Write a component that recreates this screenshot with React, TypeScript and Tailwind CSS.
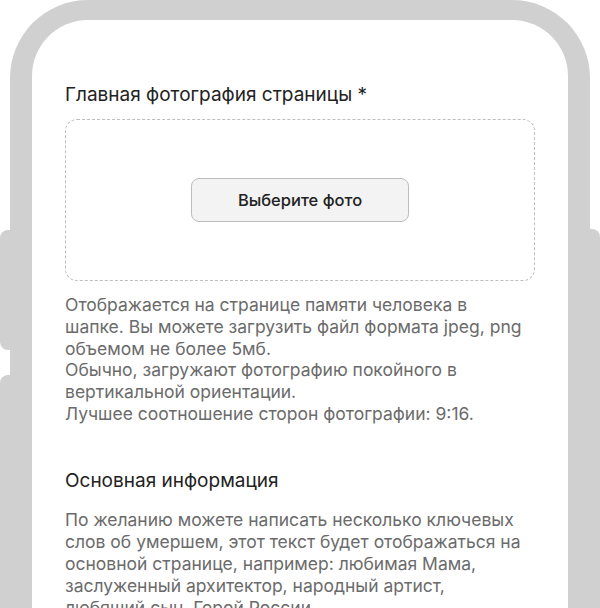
import React from "react";

const font = { fontFamily: "Inter, 'Noto Sans', sans-serif" };

export default function App() {
  return (
    <div className="relative h-[608px] w-[600px] overflow-hidden bg-white" style={font}>
      {/* side buttons */}
      <div className="absolute left-0 top-[230px] h-[120px] w-[14px] rounded-l-[8px] bg-[#d0d0d0]" />
      <div className="absolute left-0 top-[375px] h-[260px] w-[14px] rounded-l-[8px] bg-[#d0d0d0]" />
      <div className="absolute right-0 top-[229px] h-[400px] w-[14px] rounded-r-[8px] bg-[#d0d0d0]" />

      {/* phone frame */}
      <div className="relative mx-[10px] h-[640px] rounded-t-[78px] bg-[#d0d0d0] px-[22px] pt-[20px]">
        <div className="h-full rounded-t-[56px] bg-white pl-[33px] pr-[4px] pt-[62px]">
          <div className="text-[19px] leading-[26px] text-[#222]">Главная фотография страницы *</div>

          <div className="mt-[11px] flex h-[162px] w-[470px] items-center justify-center rounded-[12px] border border-dashed border-[#bdbdbd]">
            <button className="h-[44px] w-[218px] rounded-[8px] border border-[#bdbdbd] bg-[#f3f3f3] text-[16.5px] font-medium text-[#222]">
              Выберите фото
            </button>
          </div>

          <p className="mt-[13px] whitespace-nowrap text-[17.5px] leading-[21.8px] text-[#6b6b6b]">
            Отображается на странице памяти человека в<br />
            шапке. Вы можете загрузить файл формата jpeg, png<br />
            объемом не более 5мб.<br />
            Обычно, загружают фотографию покойного в<br />
            вертикальной ориентации.<br />
            Лучшее соотношение сторон фотографии: 9:16.
          </p>

          <div className="mt-[43px] text-[19px] leading-[26px] text-[#222]">Основная информация</div>

          <p className="mt-[15px] whitespace-nowrap text-[17.5px] leading-[22px] text-[#6b6b6b]">
            По желанию можете написать несколько ключевых<br />
            слов об умершем, этот текст будет отображаться на<br />
            основной странице, например: любимая Мама,<br />
            заслуженный архитектор, народный артист,<br />
            любящий сын, Герой России
          </p>
        </div>
      </div>
    </div>
  );
}
